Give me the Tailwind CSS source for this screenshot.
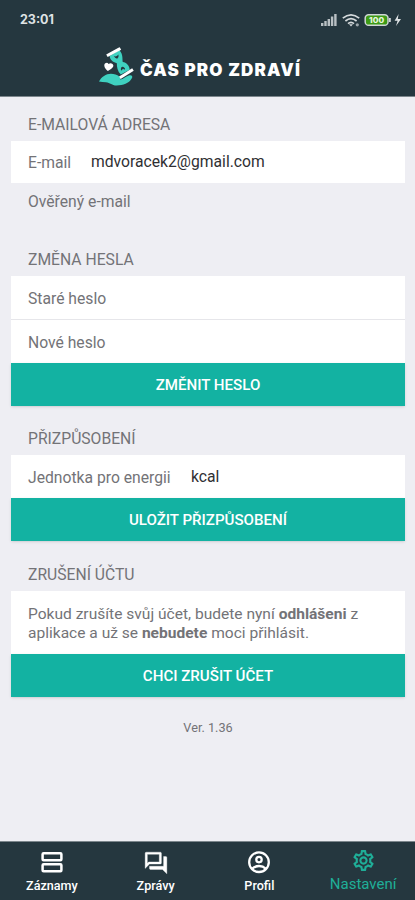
<!DOCTYPE html>
<html lang="cs" class="h-full">
<head>
    <meta charset="UTF-8">
    <meta name="viewport" content="width=device-width, initial-scale=1.0">
    <title>Čas pro zdraví – Nastavení</title>
    <script src="https://cdn.jsdelivr.net/npm/@tailwindcss/browser@4"></script>
</head>
<body class="h-[900px] w-[415px] overflow-hidden bg-[#eeeef3] text-[#737377] font-['Roboto',sans-serif] text-[15.7px] flex flex-col">

    <header class="h-[97px] shrink-0 bg-[#25373f] border-b border-[#7c868c] text-white">
        <!-- Status bar -->
        <div class="h-[39px] pl-5 pr-[13px] flex items-center justify-between">
            <span class="pt-[2px] font-['Inter',sans-serif] text-[12.5px] font-bold text-[#dfe3e5]">23:01</span>
            <svg class="h-[14px] w-[82px]" viewBox="0 0 82 14">
                <g fill="#b9c0c4">
                    <rect x="1" y="10" width="2.4" height="3"/>
                    <rect x="4.3" y="8" width="2.4" height="5"/>
                    <rect x="7.6" y="6" width="2.4" height="7"/>
                    <rect x="10.9" y="3.5" width="2.4" height="9.5"/>
                    <rect x="14.2" y="1" width="2.4" height="12"/>
                </g>
                <g fill="none" stroke="#d5dadc" stroke-width="1.7">
                    <path d="M22.8 5.2Q31 -1.6 39.2 5.2"/>
                    <path d="M25.4 8Q31 3.4 36.6 8"/>
                    <path d="M28 10.6Q31 8 34 10.6"/>
                </g>
                <path d="M29 11.2h4L31 13.4z" fill="#d5dadc"/>
                <circle cx="37.3" cy="11.8" r="1.6" fill="#9ba5aa"/>
                <rect x="45.2" y="1.7" width="22.8" height="10.6" rx="3.4" fill="#3d9a16" stroke="#cfd5d6" stroke-width="1.5"/>
                <path d="M69 5h1.8v4H69z" fill="#cfd5d6"/>
                <text x="56.6" y="9.9" text-anchor="middle" font-size="8" font-weight="800" fill="#e9f6df" font-family="Inter, sans-serif" textLength="15" lengthAdjust="spacingAndGlyphs">100</text>
                <path d="M78.6 1 74.6 7.8h3L76 13l5-7h-3.2z" fill="#dfe3e5"/>
            </svg>
        </div>
        <!-- Brand -->
        <div class="h-[57px] pl-[97px] pt-[7px] flex items-start">
            <svg class="h-[41px] w-[38px] shrink-0" viewBox="290 140 115 123">
                <path d="M296 247C306 228 326 218 346 226C357 230 365 235 360 241C368 242 376 232 386 229C394 226 400 230 395 238C386 253 370 259 349 259C335 259 330 250 317 249Q306 249 296 247Z" fill="#3fd1c0"/>
                <path d="M328 170C330 184 340 189 350 192C350 204 352 216 362 226L389 211C388 198 379 190 368 188C366 178 370 166 358 152Z" fill="#3fd1c0"/>
                <path d="M341 170Q348 174 355 165Q357 173 351 178Q344 176 341 170ZM363 214C360 205 366 199 373 205Q377 208 373 211L369 208Z" fill="#25373f"/>
                <path d="M324 167 357 149M363 233 395 213" fill="none" stroke="#fff" stroke-width="9" stroke-linecap="square"/>
                <path d="M323 215C315 210 308 198 315 192Q321 187 325 194Q331 189 337 194C345 203 332 209 323 215Z" fill="#fff"/>
            </svg>
            <h1 class="ml-[5px] mt-[11px] font-['Inter',sans-serif] text-[17px] font-black leading-[26px] tracking-[1.15px] whitespace-nowrap">ČAS PRO ZDRAVÍ</h1>
        </div>
    </header>

    <main class="flex-1 pl-[11px] pr-[10px] flex flex-col">
        <!-- E-mail -->
        <section class="h-[135px]">
            <h2 class="h-11 px-[17px] pt-4 leading-6">E-MAILOVÁ ADRESA</h2>
            <div class="h-[42px] px-[17px] bg-white flex items-center">
                <label class="w-[63px] pt-[2px]">E-mail</label>
                <span class="text-[#303033]">mdvoracek2@gmail.com</span>
            </div>
            <p class="px-[17px] pt-[7px] leading-6">Ověřený e-mail</p>
        </section>

        <!-- Heslo -->
        <section class="h-[179px]">
            <h2 class="h-11 px-[17px] pt-4 leading-6">ZMĚNA HESLA</h2>
            <div class="h-11 px-[17px] pt-[2px] bg-white border-b border-[#e6e6ea] flex items-center">Staré heslo</div>
            <div class="h-[43px] px-[17px] pt-[2px] bg-white flex items-center">Nové heslo</div>
            <button class="block w-full h-[43px] pt-[2px] bg-[#13b2a2] text-white text-[15.1px] font-medium shadow-sm"><span>ZMĚNIT HESLO</span></button>
        </section>

        <!-- Přizpůsobení -->
        <section class="h-[136px]">
            <h2 class="h-11 px-[17px] pt-4 leading-6">PŘIZPŮSOBENÍ</h2>
            <div class="h-[43px] px-[17px] bg-white flex items-center">
                <label class="w-[163px] pt-[2px]">Jednotka pro energii</label>
                <span class="text-[#303033]">kcal</span>
            </div>
            <button class="block w-full h-[43px] pt-[2px] bg-[#13b2a2] text-white text-[15.1px] font-medium shadow-sm"><span>ULOŽIT PŘIZPŮSOBENÍ</span></button>
        </section>

        <!-- Zrušení účtu -->
        <section>
            <h2 class="h-11 px-[17px] pt-4 leading-6">ZRUŠENÍ ÚČTU</h2>
            <p class="h-[63px] px-[17px] pt-[14px] bg-white text-[15.55px] leading-[19px] whitespace-nowrap">
                <span>Pokud zrušíte svůj účet, budete nyní <b>odhlášeni</b> z</span><br>
                <span>aplikace a už se <b>nebudete</b> moci přihlásit.</span>
            </p>
            <button class="block w-full h-[43px] pt-[2px] bg-[#13b2a2] text-white text-[15.1px] font-medium shadow-sm"><span>CHCI ZRUŠIT ÚČET</span></button>
        </section>

        <p class="mt-[21px] text-center text-[12.7px] leading-5"><span>Ver. 1.36</span></p>
    </main>

    <nav class="h-[59px] shrink-0 bg-[#25373f] border-t border-[#7c868c] grid grid-cols-4 text-[12.6px] text-white">
        <a class="pt-[8px] flex flex-col items-center">
            <svg class="size-6" viewBox="0 0 24 24" fill="none" stroke="currentColor" stroke-width="2.5">
                <rect x="2.6" y="3.2" width="18.8" height="7" rx="1"/>
                <rect x="2.6" y="14.2" width="18.8" height="7" rx="1"/>
            </svg>
            <span class="mt-[2px] leading-5 font-medium">Záznamy</span>
        </a>
        <a class="pt-[8px] flex flex-col items-center">
            <svg class="size-[26px]" viewBox="0 0 24 24" fill="currentColor" stroke="currentColor" stroke-width=".3">
                <path d="M15 4v7H5.17L4 12.17V4h11m1-2H3c-.55 0-1 .45-1 1v14l4-4h10c.55 0 1-.45 1-1V3c0-.55-.45-1-1-1zm5 4h-2v9H6v2c0 .55.45 1 1 1h11l4 4V7c0-.55-.45-1-1-1z"/>
            </svg>
            <span class="leading-5 font-medium">Zprávy</span>
        </a>
        <a class="pt-[8px] flex flex-col items-center">
            <svg class="size-6" viewBox="0 0 24 24" fill="none" stroke="currentColor" stroke-width="2.3">
                <circle cx="12" cy="12.2" r="9.8"/>
                <circle cx="12" cy="9.6" r="2.7"/>
                <path d="M5 18.8Q8 16 12 16T19 18.8"/>
            </svg>
            <span class="mt-[2px] leading-5 font-medium">Profil</span>
        </a>
        <a class="pt-[6px] flex flex-col items-center text-[#1fae98]">
            <svg class="size-[25px]" viewBox="0 0 24 24" fill="currentColor">
                <path d="M19.43 12.98c.04-.32.07-.64.07-.98 0-.34-.03-.66-.07-.98l2.11-1.65c.19-.15.24-.42.12-.64l-2-3.46c-.09-.16-.26-.25-.44-.25-.06 0-.12.01-.17.03l-2.49 1c-.52-.4-1.08-.73-1.69-.98l-.38-2.65C14.46 2.18 14.25 2 14 2h-4c-.25 0-.46.18-.49.42l-.38 2.65c-.61.25-1.17.59-1.69.98l-2.49-1c-.06-.02-.12-.03-.18-.03-.17 0-.34.09-.43.25l-2 3.46c-.13.22-.07.49.12.64l2.11 1.65c-.04.32-.07.65-.07.98s.03.66.07.98l-2.11 1.65c-.19.15-.24.42-.12.64l2 3.46c.09.16.26.25.44.25.06 0 .12-.01.17-.03l2.49-1c.52.4 1.08.73 1.69.98l.38 2.65c.03.24.24.42.49.42h4c.25 0 .46-.18.49-.42l.38-2.65c.61-.25 1.17-.59 1.69-.98l2.49 1c.06.02.12.03.18.03.17 0 .34-.09.43-.25l2-3.46c.12-.22.07-.49-.12-.64l-2.11-1.65zm-1.98-1.71c.04.31.05.52.05.73 0 .21-.02.43-.05.73l-.14 1.13.89.7 1.08.84-.7 1.21-1.27-.51-1.04-.42-.9.68c-.43.32-.84.56-1.25.73l-1.06.43-.16 1.13-.2 1.35h-1.4l-.19-1.35-.16-1.13-1.06-.43c-.43-.18-.83-.41-1.23-.71l-.91-.7-1.06.43-1.27.51-.7-1.21 1.08-.84.89-.7-.14-1.13c-.03-.31-.05-.54-.05-.74s.02-.43.05-.73l.14-1.13-.89-.7-1.08-.84.7-1.21 1.27.51 1.04.42.9-.68c.43-.32.84-.56 1.25-.73l1.06-.43.16-1.13.2-1.35h1.39l.19 1.35.16 1.13 1.06.43c.43.18.83.41 1.23.71l.91.7 1.06-.43 1.27-.51.7 1.21-1.07.85-.89.7.14 1.13zM12 8c-2.21 0-4 1.79-4 4s1.79 4 4 4 4-1.79 4-4-1.79-4-4-4zm0 6c-1.1 0-2-.9-2-2s.9-2 2-2 2 .9 2 2-.9 2-2 2z"/>
            </svg>
            <span class="mt-px text-[15px] leading-5">Nastavení</span>
        </a>
    </nav>

</body>
</html>
